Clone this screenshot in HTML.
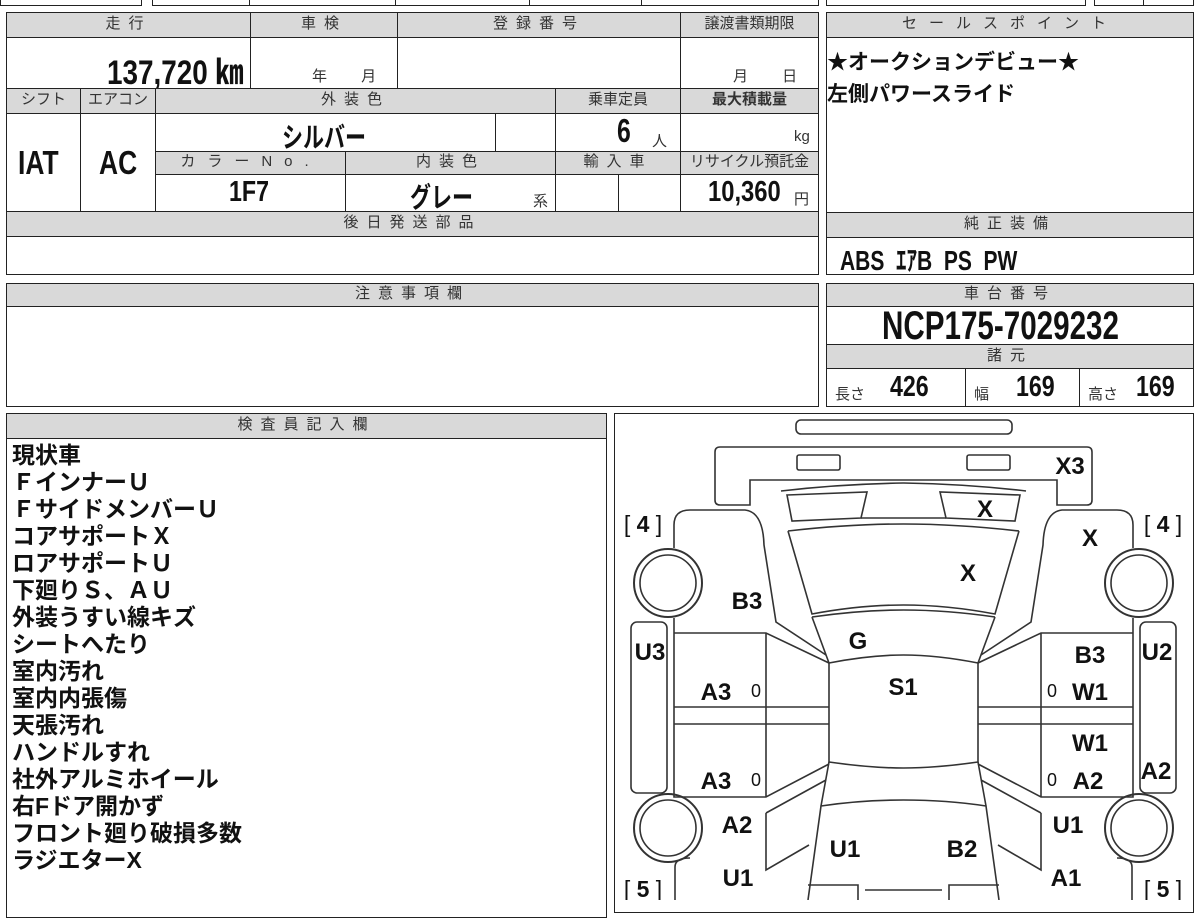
<!DOCTYPE html>
<html><head><meta charset="utf-8"><style>
body{margin:0;width:1200px;height:900px;overflow:hidden;background:#fff;position:relative;font-family:"Liberation Sans","Noto Sans CJK JP",sans-serif;color:#111}
.b{position:absolute;box-sizing:border-box;border:1.5px solid #222;background:#fff}
.h{background:#d9d9d9;color:#333;font-size:15px;text-align:center;letter-spacing:8px;line-height:22px}
.v{position:absolute;font-weight:bold;white-space:nowrap;transform-origin:left top}
.t{position:absolute;font-size:15px;color:#333;white-space:nowrap}
.ins{position:absolute;left:12px;top:442px;font-size:23px;font-weight:bold;line-height:27px;white-space:pre}
</style></head><body>
<!-- top strip -->
<div class="b" style="left:0;top:-10px;width:142px;height:16px"></div>
<div class="b" style="left:152px;top:-10px;width:490px;height:16px"></div>
<div class="b" style="left:249px;top:-10px;width:147px;height:16px"></div>
<div class="b" style="left:395px;top:-10px;width:135px;height:16px"></div>
<div class="b" style="left:641px;top:-10px;width:178px;height:16px"></div>
<div class="b" style="left:826px;top:-10px;width:260px;height:16px"></div>
<div class="b" style="left:1094px;top:-10px;width:50px;height:16px"></div>
<div class="b" style="left:1143px;top:-10px;width:51px;height:16px"></div>

<!-- main table -->
<div class="b h" style="left:6px;top:12px;width:245px;height:26px">走行</div>
<div class="b h" style="left:250px;top:12px;width:148px;height:26px">車検</div>
<div class="b h" style="left:397px;top:12px;width:284px;height:26px">登録番号</div>
<div class="b h" style="left:680px;top:12px;width:139px;height:26px;letter-spacing:0">譲渡書類期限</div>
<div class="b" style="left:6px;top:37px;width:245px;height:52px"></div>
<div class="b" style="left:250px;top:37px;width:148px;height:52px"></div>
<div class="b" style="left:397px;top:37px;width:284px;height:52px"></div>
<div class="b" style="left:680px;top:37px;width:139px;height:52px"></div>
<div class="v" style="left:107px;top:45px;font-size:34px;transform:scaleX(0.82)">137,720 ㎞</div>
<div class="t" style="left:312px;top:65px">年　　 月</div>
<div class="t" style="left:733px;top:65px">月　　 日</div>

<div class="b h" style="left:6px;top:88px;width:75px;height:26px;letter-spacing:0">シフト</div>
<div class="b h" style="left:80px;top:88px;width:76px;height:26px;letter-spacing:0">エアコン</div>
<div class="b h" style="left:155px;top:88px;width:401px;height:26px">外装色</div>
<div class="b h" style="left:555px;top:88px;width:126px;height:26px;letter-spacing:0">乗車定員</div>
<div class="b h" style="left:680px;top:88px;width:139px;height:26px;letter-spacing:0;font-weight:bold">最大積載量</div>
<div class="b" style="left:6px;top:113px;width:75px;height:99px"></div>
<div class="b" style="left:80px;top:113px;width:76px;height:99px"></div>
<div class="b" style="left:155px;top:113px;width:341px;height:39px"></div>
<div class="b" style="left:495px;top:113px;width:61px;height:39px"></div>
<div class="b" style="left:555px;top:113px;width:126px;height:39px"></div>
<div class="b" style="left:680px;top:113px;width:139px;height:39px"></div>
<div class="v" style="left:18px;top:144px;font-size:33px;transform:scaleX(0.8)">IAT</div>
<div class="v" style="left:99px;top:144px;font-size:33px;transform:scaleX(0.8)">AC</div>
<div class="v" style="left:282px;top:116px;font-size:28px;transform:scaleX(0.75)">シルバー</div>
<div class="v" style="left:617px;top:112px;font-size:33px;transform:scaleX(0.75)">6</div>
<div class="t" style="left:652px;top:130px">人</div>
<div class="t" style="left:794px;top:128px">kg</div>

<div class="b h" style="left:155px;top:151px;width:191px;height:24px;letter-spacing:12px;line-height:20px">カラーNo.</div>
<div class="b h" style="left:345px;top:151px;width:211px;height:24px;line-height:20px">内装色</div>
<div class="b h" style="left:555px;top:151px;width:126px;height:24px;line-height:20px">輸入車</div>
<div class="b h" style="left:680px;top:151px;width:139px;height:24px;letter-spacing:0;line-height:20px">リサイクル預託金</div>
<div class="b" style="left:155px;top:174px;width:191px;height:38px"></div>
<div class="b" style="left:345px;top:174px;width:211px;height:38px"></div>
<div class="b" style="left:555px;top:174px;width:64px;height:38px"></div>
<div class="b" style="left:618px;top:174px;width:63px;height:38px"></div>
<div class="b" style="left:680px;top:174px;width:139px;height:38px"></div>
<div class="v" style="left:229px;top:176px;font-size:29px;transform:scaleX(0.8)">1F7</div>
<div class="v" style="left:410px;top:176px;font-size:28px;transform:scaleX(0.75)">グレー</div>
<div class="t" style="left:533px;top:190px">系</div>
<div class="v" style="left:708px;top:176px;font-size:29px;transform:scaleX(0.82)">10,360</div>
<div class="t" style="left:794px;top:188px">円</div>

<div class="b h" style="left:6px;top:211px;width:813px;height:26px">後日発送部品</div>
<div class="b" style="left:6px;top:236px;width:813px;height:39px"></div>

<!-- right top -->
<div class="b h" style="left:826px;top:12px;width:368px;height:26px;letter-spacing:12px">セールスポイント</div>
<div class="b" style="left:826px;top:37px;width:368px;height:176px"></div>
<div class="v" style="left:827px;top:46px;font-size:21px">★オークションデビュー★</div>
<div class="v" style="left:827px;top:78px;font-size:21px">左側パワースライド</div>
<div class="b h" style="left:826px;top:212px;width:368px;height:26px">純正装備</div>
<div class="b" style="left:826px;top:237px;width:368px;height:38px"></div>
<div class="v" style="left:840px;top:239px;font-size:28px;transform:scaleX(0.75)">ABS&nbsp; ｴｱB&nbsp; PS&nbsp; PW</div>

<!-- notes -->
<div class="b h" style="left:6px;top:283px;width:813px;height:24px;line-height:20px">注意事項欄</div>
<div class="b" style="left:6px;top:306px;width:813px;height:101px"></div>

<div class="b h" style="left:826px;top:283px;width:368px;height:24px;line-height:20px">車台番号</div>
<div class="b" style="left:826px;top:306px;width:368px;height:39px"></div>
<div class="v" style="left:882px;top:304px;font-size:40px;transform:scaleX(0.74)">NCP175-7029232</div>
<div class="b h" style="left:826px;top:344px;width:368px;height:25px;line-height:21px">諸元</div>
<div class="b" style="left:826px;top:368px;width:140px;height:39px"></div>
<div class="b" style="left:965px;top:368px;width:115px;height:39px"></div>
<div class="b" style="left:1079px;top:368px;width:115px;height:39px"></div>
<div class="t" style="left:835px;top:383px">長さ</div>
<div class="v" style="left:890px;top:371px;font-size:29px;transform:scaleX(0.8)">426</div>
<div class="t" style="left:974px;top:383px">幅</div>
<div class="v" style="left:1016px;top:371px;font-size:29px;transform:scaleX(0.8)">169</div>
<div class="t" style="left:1088px;top:383px">高さ</div>
<div class="v" style="left:1136px;top:371px;font-size:29px;transform:scaleX(0.8)">169</div>

<!-- inspector -->
<div class="b h" style="left:6px;top:413px;width:601px;height:26px">検査員記入欄</div>
<div class="b" style="left:6px;top:438px;width:601px;height:480px"></div>
<div class="ins">現状車
ＦインナーＵ
ＦサイドメンバーＵ
コアサポートＸ
ロアサポートＵ
下廻りＳ、ＡＵ
外装うすい線キズ
シートへたり
室内汚れ
室内内張傷
天張汚れ
ハンドルすれ
社外アルミホイール
右Fドア開かず
フロント廻り破損多数
ラジエターX</div>

<!-- diagram -->
<div class="b" style="left:614px;top:413px;width:580px;height:500px"></div>
<svg style="position:absolute;left:0;top:0" width="1200" height="900" viewBox="0 0 1200 900">
<g fill="none" stroke="#333" stroke-width="1.6">
<rect x="796" y="420" width="216" height="14" rx="5"/>
<g id="half">
<path d="M903.5,447 L720,447 Q715,447 715,452 L715,500 Q715,505 720,505 L750,505 L750,480 L903.5,480"/>
<rect x="797" y="455" width="43" height="15" rx="2"/>
<path d="M781,491 Q840,484 903.5,483"/>
<path d="M787,495 L867,492 L861,518 L792,521 Z"/>
<path d="M861,518 L903.5,518"/>
<path d="M788,531 Q850,524 903.5,524 M788,531 L812,614 Q860,605 903.5,605"/>
<path d="M812,617 Q860,610 903.5,610 M812,617 L829,663 Q870,655 903.5,655"/>
<path d="M829,663 L829,762 Q870,768 903.5,768"/>
<path d="M829,762 L821,806 Q860,800 903.5,800 M821,806 L808,900"/>
<path d="M674,548 L674,525 Q674,510 690,510 L745,510 Q763,512 764,545 L776,622 L826,655"/>
<path d="M674,618 L674,633 L766,633 L829,663 M766,633 L766,797 M674,707 L829,707 M674,724 L829,724 M674,633 L674,797 L766,797 L829,764"/>
<path d="M766,813 L826,780 M766,813 L766,870 L809,845 M675,867 L675,900 M675,867 Q675,858 690,858"/>
<rect x="631" y="622" width="36" height="171" rx="6"/>
<circle cx="668" cy="583" r="34" stroke-width="2"/><circle cx="668" cy="583" r="28"/>
<circle cx="668" cy="828" r="34" stroke-width="2"/><circle cx="668" cy="828" r="28"/>
<path d="M808,885 L858,885 L858,900 M865,890 L903.5,890"/>
</g>
<use href="#half" transform="translate(1807,0) scale(-1,1)"/>
</g>
<g font-family="Liberation Sans, sans-serif" font-weight="bold" font-size="24" fill="#111" text-anchor="middle">
<text x="1070" y="474">X3</text>
<text x="985" y="517">X</text>
<text x="1090" y="546">X</text>
<text x="968" y="581">X</text>
<text x="747" y="609">B3</text>
<text x="858" y="649">G</text>
<text x="650" y="660">U3</text>
<text x="1090" y="663">B3</text>
<text x="1157" y="660">U2</text>
<text x="716" y="700">A3</text>
<text x="903" y="695">S1</text>
<text x="1090" y="700">W1</text>
<text x="1090" y="751">W1</text>
<text x="1156" y="779">A2</text>
<text x="716" y="789">A3</text>
<text x="1088" y="789">A2</text>
<text x="737" y="833">A2</text>
<text x="1068" y="833">U1</text>
<text x="845" y="857">U1</text>
<text x="962" y="857">B2</text>
<text x="738" y="886">U1</text>
<text x="1066" y="886">A1</text>
<g font-weight="normal" font-size="18">
<text x="756" y="697">0</text><text x="1052" y="697">0</text>
<text x="756" y="786">0</text><text x="1052" y="786">0</text>
</g>
<g font-size="23">
<text x="643" y="532"><tspan font-weight="normal">[ </tspan>4<tspan font-weight="normal"> ]</tspan></text>
<text x="1163" y="532"><tspan font-weight="normal">[ </tspan>4<tspan font-weight="normal"> ]</tspan></text>
<text x="643" y="897"><tspan font-weight="normal">[ </tspan>5<tspan font-weight="normal"> ]</tspan></text>
<text x="1163" y="897"><tspan font-weight="normal">[ </tspan>5<tspan font-weight="normal"> ]</tspan></text>
</g>
</g>
</svg>
</body></html>
